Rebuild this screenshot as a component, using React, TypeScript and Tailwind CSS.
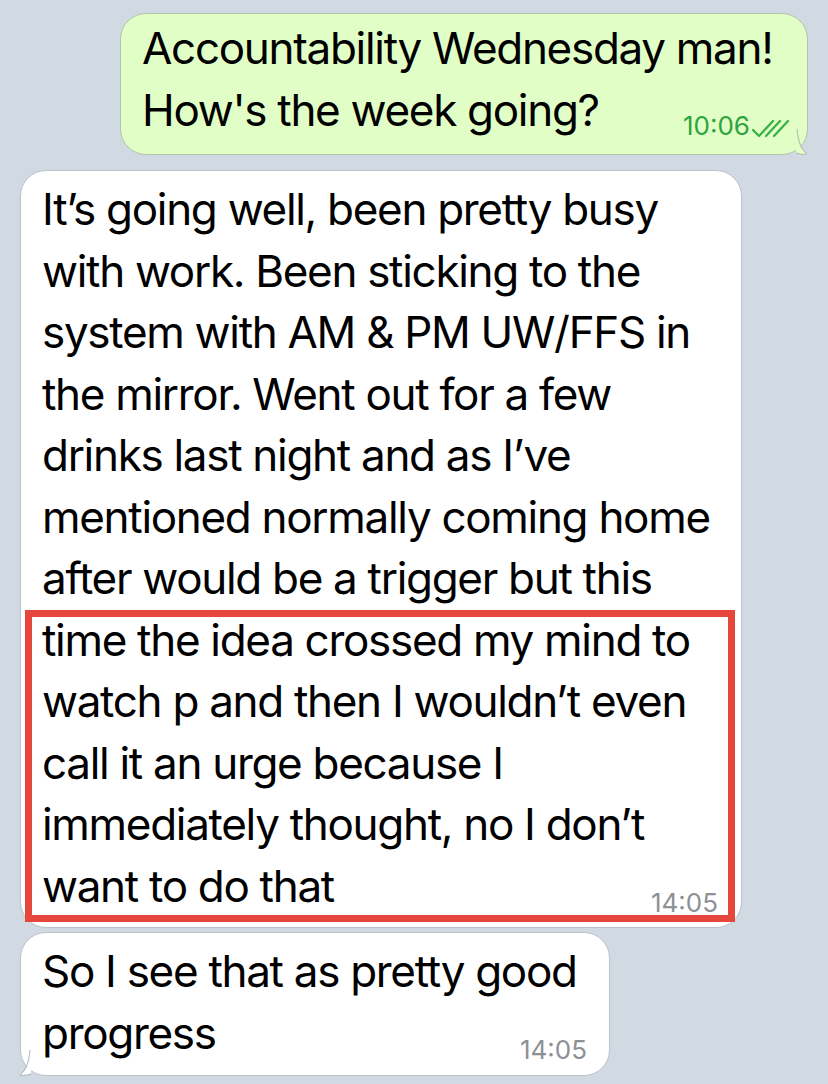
import React from "react";

const font = { fontFamily: "Inter, 'Noto Sans', sans-serif" };

const replyLines = [
  "It’s going well, been pretty busy",
  "with work. Been sticking to the",
  "system with AM & PM UW/FFS in",
  "the mirror. Went out for a few",
  "drinks last night and as I’ve",
  "mentioned normally coming home",
  "after would be a trigger but this",
];

const boxedLines = [
  "time the idea crossed my mind to",
  "watch p and then I wouldn’t even",
  "call it an urge because I",
  "immediately thought, no I don’t",
];

function ReadChecks() {
  return (
    <svg width="38" height="18" viewBox="0 0 38 18" fill="none" className="ml-[2px] mb-[1px]">
      <path d="M1 10 L7 16 L21 1" stroke="#38b247" strokeWidth="2.3" strokeLinecap="round" strokeLinejoin="round" />
      <path d="M14 16 L28 1" stroke="#38b247" strokeWidth="2.3" strokeLinecap="round" />
      <path d="M22 16 L36 1" stroke="#38b247" strokeWidth="2.3" strokeLinecap="round" />
    </svg>
  );
}

function TailRight() {
  return (
    <svg width="22" height="26" viewBox="0 0 22 26" className="absolute right-[-11px] bottom-[-1px]">
      <path d="M0 0 C1 12 4 20 11 25 C5 26 1 24 -3 22 Z" fill="#e1fec6" />
      <path d="M1 0 C2 12 5 20 11 25 C6 26 2 25 -2 23" fill="none" stroke="#a9b8a4" strokeWidth="1" />
    </svg>
  );
}

function TailLeft() {
  return (
    <svg width="22" height="26" viewBox="0 0 22 26" className="absolute left-[-12px] bottom-[-1px]">
      <path d="M22 0 C21 12 18 20 11 25 C17 26 21 24 25 22 Z" fill="#ffffff" />
      <path d="M21 0 C20 12 17 20 11 25 C16 26 20 25 24 23" fill="none" stroke="#aab4be" strokeWidth="1" />
    </svg>
  );
}

export default function App() {
  return (
    <div className="w-[828px] h-[1084px] overflow-hidden bg-[#d1dae3] pt-[13px]" style={font}>
      {/* outgoing */}
      <div className="flex justify-end pr-[20px]">
        <div className="relative w-[688px] rounded-[26px] bg-[#e1fec6] border border-[#b3c4ac] pl-[21px] pr-[17px] pt-[4px] pb-[13px] text-[44px] leading-[61.5px] tracking-[-1.3px] text-black">
          <div className="whitespace-nowrap">Accountability Wednesday man!</div>
          <div className="flex items-end justify-between">
            <span className="whitespace-nowrap">How's the week going?</span>
            <span className="flex items-end text-[26px] leading-none tracking-normal text-[#2fa43f] mb-[2px]">
              10:06
              <ReadChecks />
            </span>
          </div>
          <TailRight />
        </div>
      </div>

      {/* incoming, long */}
      <div className="mt-[15px] pl-[20px]">
        <div className="relative w-[722px] rounded-[26px] bg-white border border-[#b9c3cc] pl-[21px] pr-[23px] pt-[8px] pb-[10px] text-[44px] leading-[61.5px] tracking-[-1.3px] text-black">
          {replyLines.map((l) => (
            <div key={l} className="whitespace-nowrap">{l}</div>
          ))}
          <div className="relative">
            {boxedLines.map((l) => (
              <div key={l} className="whitespace-nowrap">{l}</div>
            ))}
            <div className="flex items-end justify-between">
              <span className="whitespace-nowrap">want to do that</span>
              <span className="text-[26px] leading-none tracking-normal text-[#8d9196] mb-[1px]">14:05</span>
            </div>
            <div className="absolute left-[-17px] right-[-17px] top-[0px] bottom-[-5px] border-[7px] border-solid border-[#e5473c] pointer-events-none" />
          </div>
        </div>
      </div>

      {/* incoming, short */}
      <div className="mt-[4px] pl-[20px]">
        <div className="relative w-[590px] rounded-[26px] bg-white border border-[#b9c3cc] pl-[21px] pr-[22px] pt-[8px] pb-[11px] text-[44px] leading-[61.5px] tracking-[-1.3px] text-black">
          <div className="whitespace-nowrap">So I see that as pretty good</div>
          <div className="flex items-end justify-between">
            <span className="whitespace-nowrap">progress</span>
            <span className="text-[26px] leading-none tracking-normal text-[#8d9196] mb-[1px]">14:05</span>
          </div>
          <TailLeft />
        </div>
      </div>
    </div>
  );
}
